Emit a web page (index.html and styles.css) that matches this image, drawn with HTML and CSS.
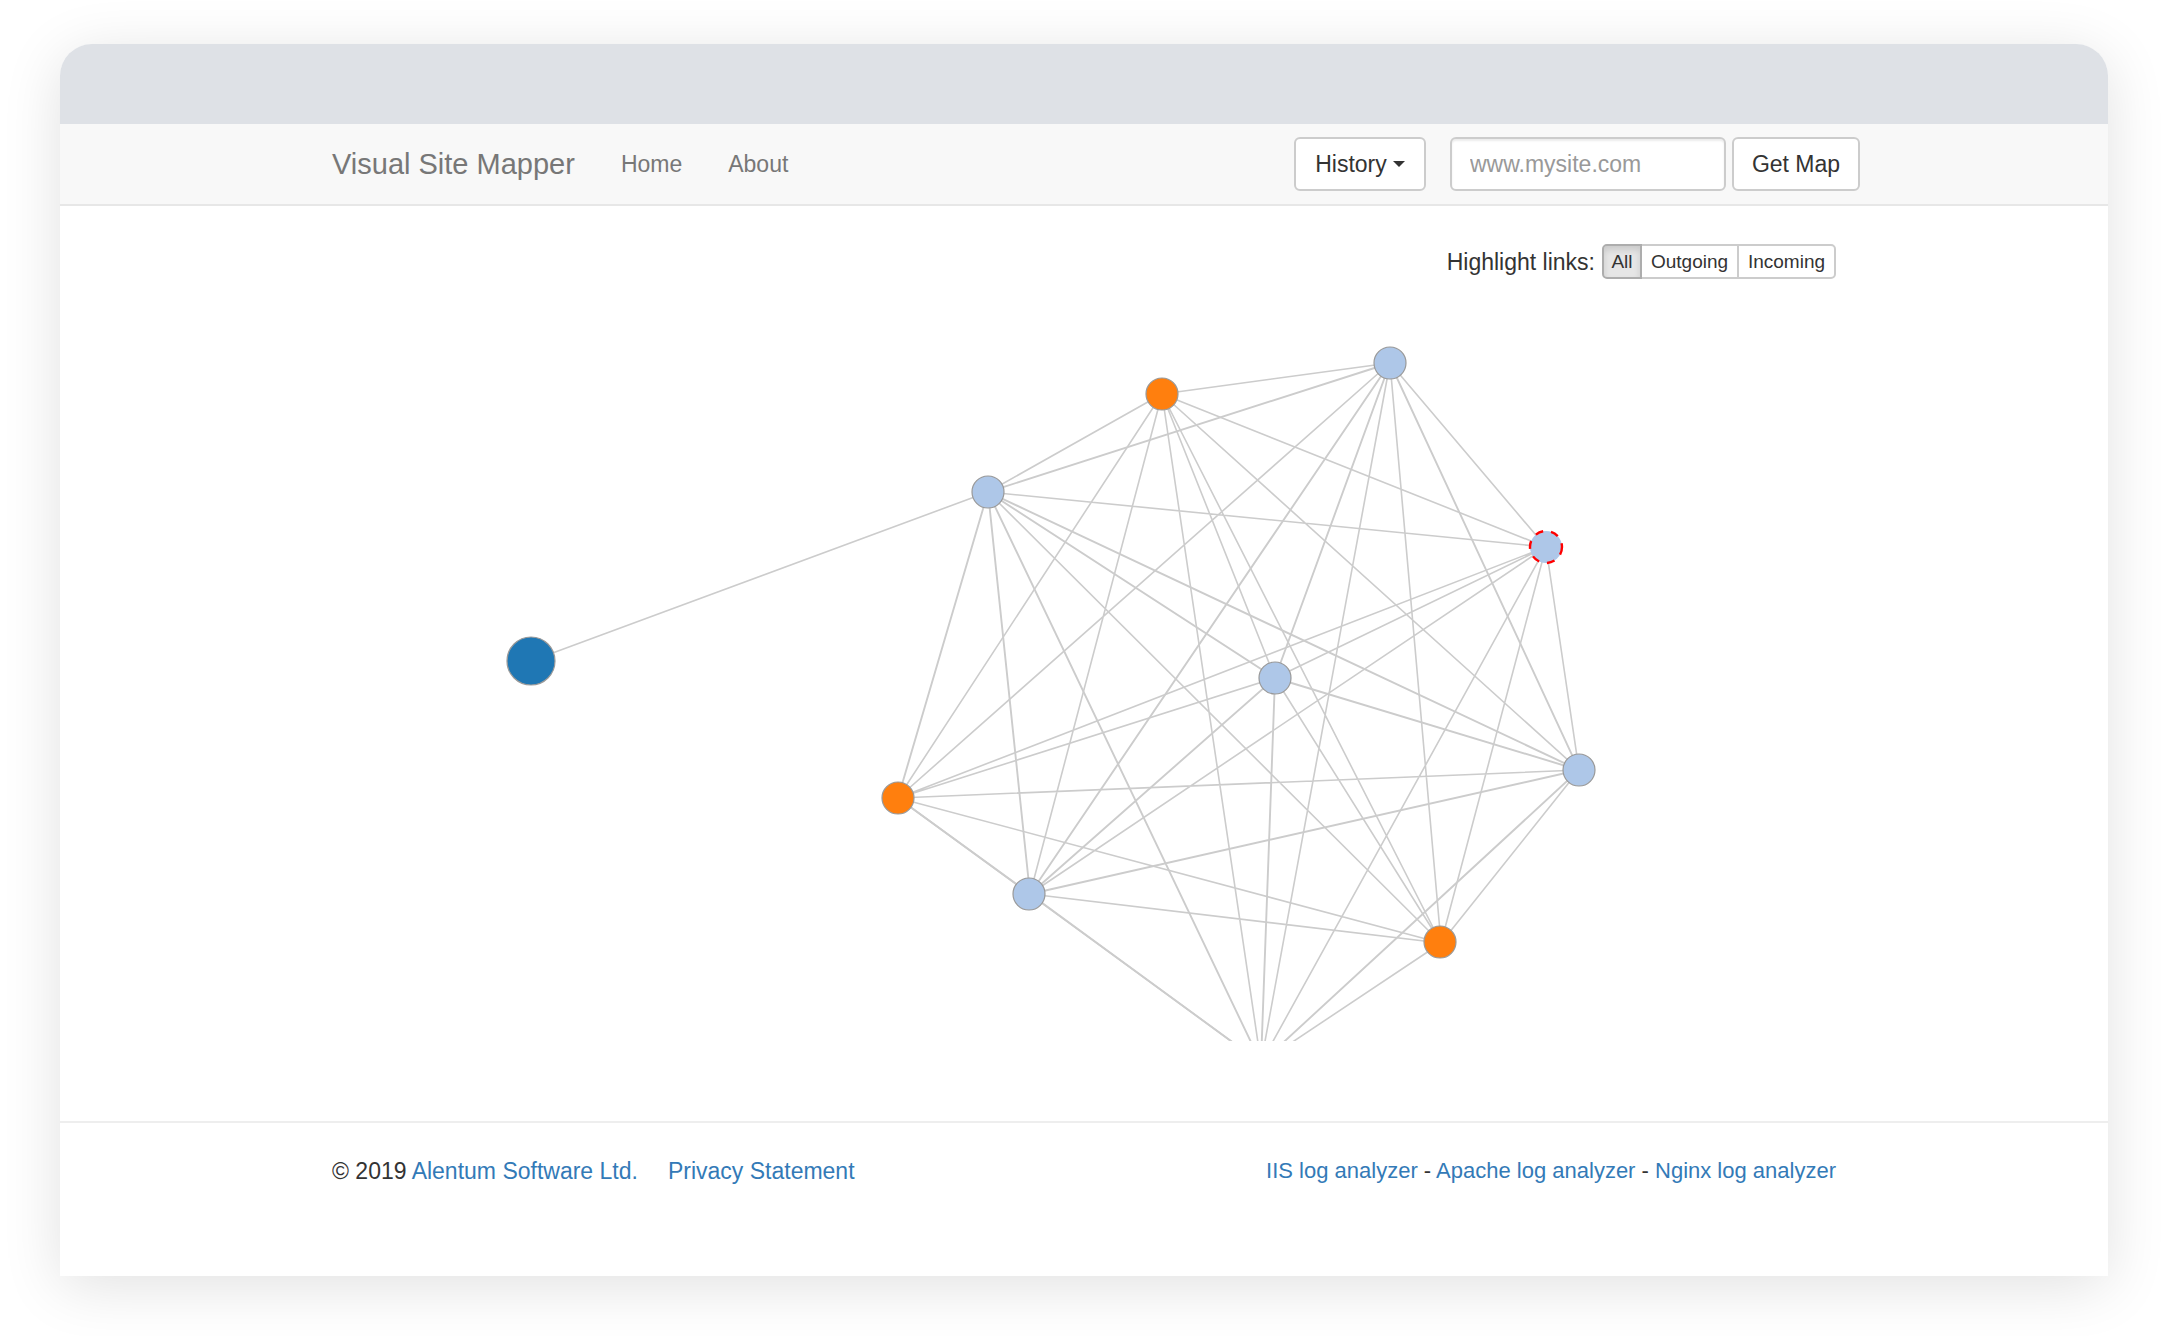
FILE: index.html
```html
<!DOCTYPE html>
<html lang="en">
<head>
  <meta charset="utf-8">
  <title>Visual Site Mapper</title>
  <meta name="viewport" content="width=device-width, initial-scale=1">
  <link rel="stylesheet" href="styles.css">
</head>
<body>
  <div class="window">
    <div class="titlebar"></div>
    <header class="navbar">
      <div class="container navbar-inner">
        <a class="brand" href="#">Visual Site Mapper</a>
        <nav class="nav">
          <a href="#">Home</a>
          <a href="#">About</a>
        </nav>
        <form class="map-form">
          <button class="btn history" type="button">History <span class="caret"></span></button>
          <input class="field" type="text" placeholder="www.mysite.com" aria-label="Site address">
          <button class="btn get-map" type="button">Get Map</button>
        </form>
      </div>
    </header>
    <main class="container main">
      <div class="toolbar">
        <span id="highlight-label">Highlight links:</span>
        <div class="btn-group" role="group" aria-labelledby="highlight-label">
          <button class="btn-small all active" type="button" aria-pressed="true">All</button>
          <button class="btn-small" type="button" aria-pressed="false">Outgoing</button>
          <button class="btn-small" type="button" aria-pressed="false">Incoming</button>
        </div>
      </div>
      <svg class="graph" viewBox="332 279 1504 762" role="img" aria-label="Site map">
        <!-- one-way links -->
        <path class="link" d="M988 492L531 661M988 492L1162 394M988 492L1546 547M988 492L1441 943
          M1162 394L1390 363M1162 394L1546 547M1162 394L1275 678M1162 394L1579 770M1162 394L898 798M1162 394L1030 894M1162 394L1441 943M1162 394L1261 1063
          M1390 363L1546 547M1390 363L898 798M1390 363L1441 943M1390 363L1261 1063
          M1546 547L1275 678M1546 547L1579 770M1546 547L898 798M1546 547L1030 894M1546 547L1441 943M1546 547L1261 1063
          M1275 678L898 798M1275 678L1441 943
          M1579 770L898 798M1579 770L1441 943
          M898 798L1441 943M898 798L1261 1063
          M1030 894L1441 943M1441 943L1261 1063"/>
        <!-- two-way links -->
        <path class="link both" d="M988 492L1390 363M988 492L1275 678M988 492L1579 770M988 492L898 798M988 492L1030 894M988 492L1261 1063
          M1390 363L1275 678M1390 363L1579 770M1390 363L1030 894
          M1275 678L1579 770M1275 678L1030 894M1275 678L1261 1063
          M1579 770L1030 894M1579 770L1261 1063
          M898 798L1030 894M1030 894L1261 1063"/>
        <circle class="node root" cx="531" cy="661" r="24"/>
        <circle class="node page" cx="988" cy="492" r="16"/>
        <circle class="node outer" cx="1162" cy="394" r="16"/>
        <circle class="node page" cx="1390" cy="363" r="16"/>
        <circle class="node page selected" cx="1546" cy="547" r="16"/>
        <circle class="node page" cx="1275" cy="678" r="16"/>
        <circle class="node page" cx="1579" cy="770" r="16"/>
        <circle class="node outer" cx="898" cy="798" r="16"/>
        <circle class="node page" cx="1029" cy="894" r="16"/>
        <circle class="node outer" cx="1440" cy="942" r="16"/>
      </svg>
    </main>
    <footer class="footer">
      <div class="container footer-inner">
        <div class="legal">
          <span>© 2019 <a href="#">Alentum Software Ltd.</a></span>
          <a href="#">Privacy Statement</a>
        </div>
        <div class="products"><a href="#">IIS log analyzer</a> - <a href="#">Apache log analyzer</a> - <a href="#">Nginx log analyzer</a></div>
      </div>
    </footer>
  </div>
</body>
</html>
```
FILE: styles.css
```css
* {
  box-sizing: border-box;
}

body {
  margin: 0;
  padding: 44px 60px 60px;
  background: #fff;
  color: #333;
  font: 23px/32px "Liberation Sans", Arial, sans-serif;
}

a {
  color: #337ab7;
  text-decoration: none;
}

button,
input {
  margin: 0;
  font: inherit;
  color: #333;
}

.window {
  background: #fff;
  border-radius: 32px 32px 0 0;
  box-shadow: 0 10px 60px rgba(0, 0, 0, 0.12);
}

.titlebar {
  height: 80px;
  background: #dee1e6;
  border-radius: 32px 32px 0 0;
}

.container {
  max-width: 1504px;
  margin: 0 auto;
}

.navbar {
  background: #f8f8f8;
  border-bottom: 2px solid #e7e7e7;
}

.navbar-inner {
  display: flex;
  align-items: center;
  min-height: 80px;
}

.navbar a {
  color: #777;
}

.brand {
  font-size: 29px;
}

.nav {
  display: flex;
  gap: 46px;
  margin-left: 46px;
}

.map-form {
  display: flex;
  gap: 6px;
  margin-left: auto;
  margin-right: -24px;
}

.btn {
  height: 54px;
  padding: 0 16px;
  background: #fff;
  border: 2px solid #ccc;
  border-radius: 6px;
}

.history {
  display: flex;
  align-items: center;
  justify-content: center;
  gap: 6px;
  width: 132px;
  margin-right: 18px;
}

.caret {
  border: 6px solid transparent;
  border-top-color: #333;
  border-bottom: 0;
}

.field {
  width: 276px;
  height: 54px;
  padding: 0 18px;
  background: #fff;
  border: 2px solid #ccc;
  border-radius: 6px;
  box-shadow: inset 0 2px 2px rgba(0, 0, 0, 0.08);
}

.field::placeholder {
  color: #999;
  opacity: 1;
}

.get-map {
  width: 128px;
}

.toolbar {
  display: flex;
  align-items: center;
  justify-content: flex-end;
  gap: 7px;
  padding-top: 38px;
}

.btn-group {
  display: flex;
}

.btn-small {
  width: 99px;
  height: 35px;
  padding: 0;
  background: #fff;
  border: 2px solid #ccc;
  margin-left: -2px;
  font-size: 19px;
}

.all {
  width: 40px;
}

.btn-small:first-child {
  margin-left: 0;
  border-radius: 5px 0 0 5px;
}

.btn-small:last-child {
  border-radius: 0 5px 5px 0;
}

.btn-small.active {
  position: relative;
  background: #e6e6e6;
  border-color: #adadad;
  box-shadow: inset 0 4px 6px rgba(0, 0, 0, 0.12);
}

.graph {
  display: block;
  width: 100%;
  overflow: hidden;
}

.link {
  fill: none;
  stroke: #ccc;
  stroke-width: 1.6;
}

.both {
  stroke-width: 1.9;
}

.node {
  stroke: #999;
  stroke-width: 1.2;
}

.root {
  fill: #1f77b4;
}

.page {
  fill: #aec7e8;
}

.outer {
  fill: #ff7f0e;
}

.selected {
  stroke: #f00;
  stroke-width: 2.4;
  stroke-dasharray: 8 8;
}

.footer {
  margin-top: 80px;
  border-top: 2px solid #eee;
}

.footer-inner {
  display: flex;
  justify-content: space-between;
  padding: 32px 0 89px;
}

.legal {
  display: flex;
  gap: 30px;
}

.products {
  font-size: 22px;
}
```
